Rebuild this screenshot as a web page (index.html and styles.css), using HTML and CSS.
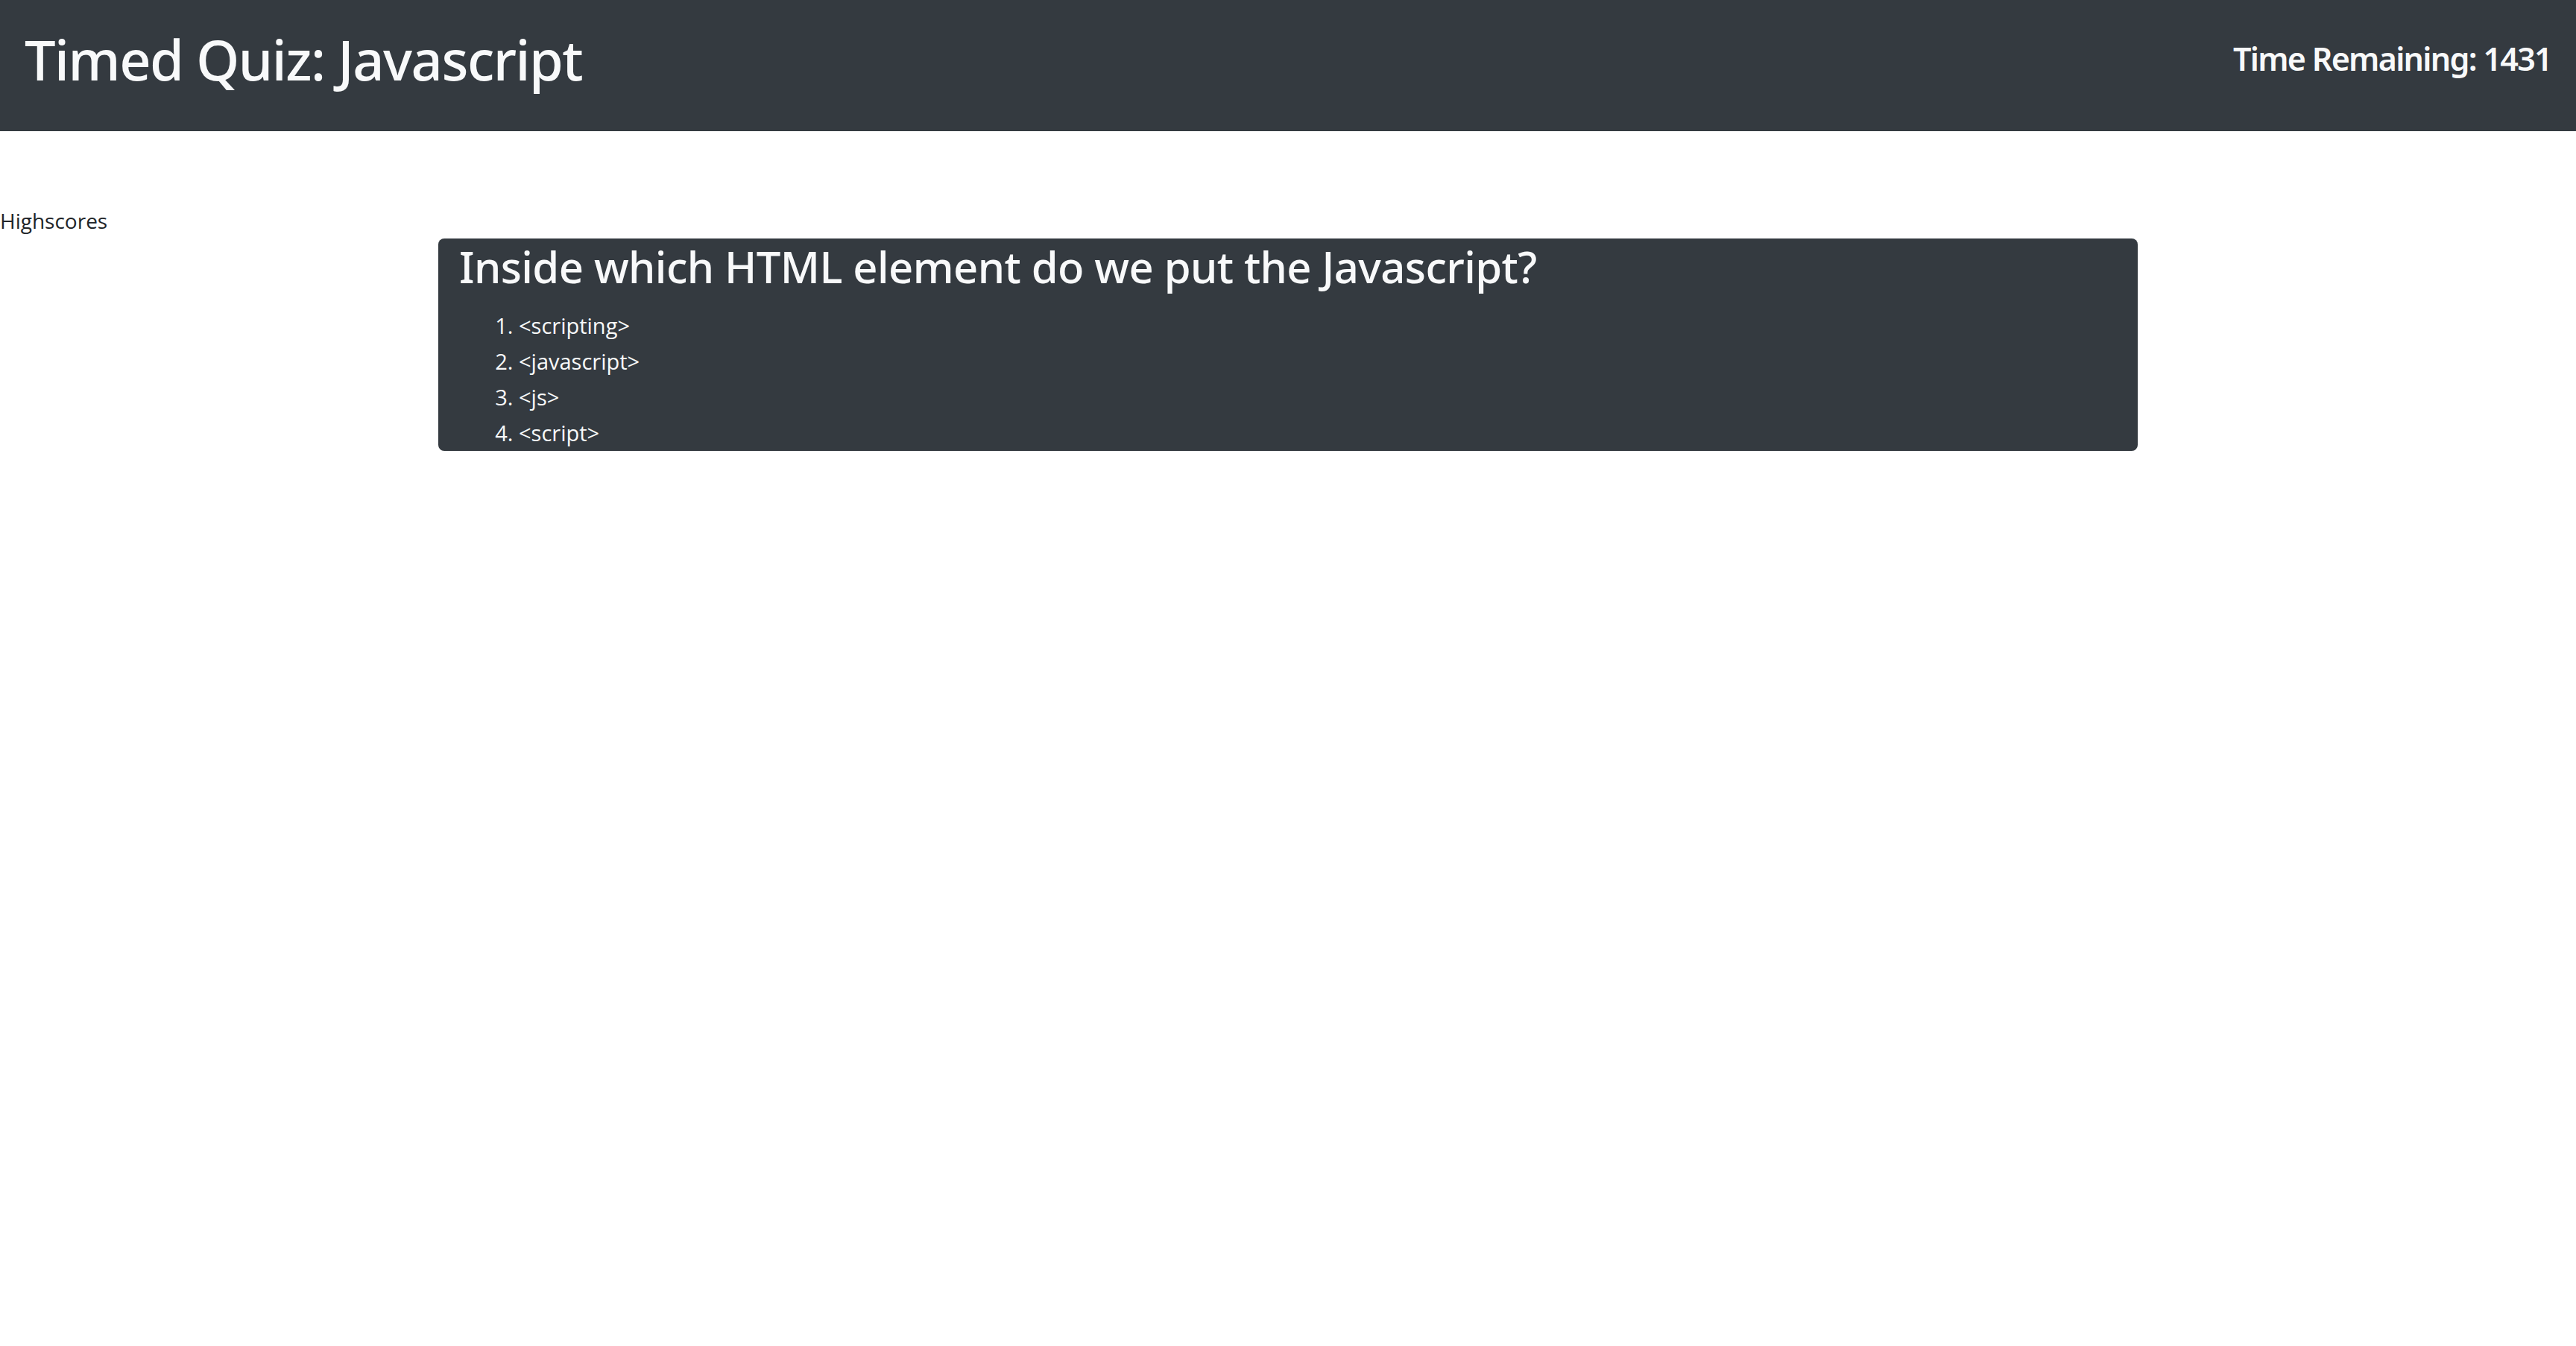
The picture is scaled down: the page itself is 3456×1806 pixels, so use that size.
FILE: index.html
```html
<!DOCTYPE html>
<html lang="en">
<head>
<meta charset="utf-8">
<title>Timed Quiz</title>
<link rel="stylesheet" href="styles.css">
</head>
<body>
<header class="topbar">
  <h1 class="brand">Timed Quiz: Javascript</h1>
  <h4 class="timer">Time Remaining: 1431</h4>
</header>
<a class="scores-link">Highscores</a>
<section class="card">
  <h2 class="question">Inside which HTML element do we put the Javascript?</h2>
  <ol class="answers">
    <li>&lt;scripting&gt;</li>
    <li>&lt;javascript&gt;</li>
    <li>&lt;js&gt;</li>
    <li>&lt;script&gt;</li>
  </ol>
</section>
</body>
</html>
```
FILE: styles.css
```css
* { box-sizing: border-box; }
body { margin: 0; font-family: "Open Sans", "Noto Sans", sans-serif; color: #212529; background: #fff; }
.topbar { height: 176px; background: #343a40; display: flex; justify-content: space-between; align-items: flex-start; padding: 36px 33px 0; }
.brand { margin: 0; font-family: "Noto Sans", "Open Sans", sans-serif; font-size: 74px; font-weight: 500; letter-spacing: -1.5px; line-height: 1.2; color: #f8f9fa; }
.timer { margin: 17px 0 0; font-family: "Noto Sans", "Open Sans", sans-serif; font-size: 43px; font-weight: 600; letter-spacing: -1.7px; line-height: 1.2; color: #f8f9fa; }
.scores-link { display: block; margin-top: 99px; font-size: 28px; line-height: 1.5; color: #212529; }
.card { width: 2280px; margin: 3px auto 0; background: #343a40; border-radius: 8px; padding: 3px 28px 0; color: #f8f9fa; }
.question { margin: 0 0 20px; font-family: "Noto Sans", "Open Sans", sans-serif; font-size: 58px; font-weight: 500; letter-spacing: -0.6px; line-height: 1.2; }
.answers { margin: 0; padding-left: 80px; font-size: 29px; line-height: 48px; }
```
